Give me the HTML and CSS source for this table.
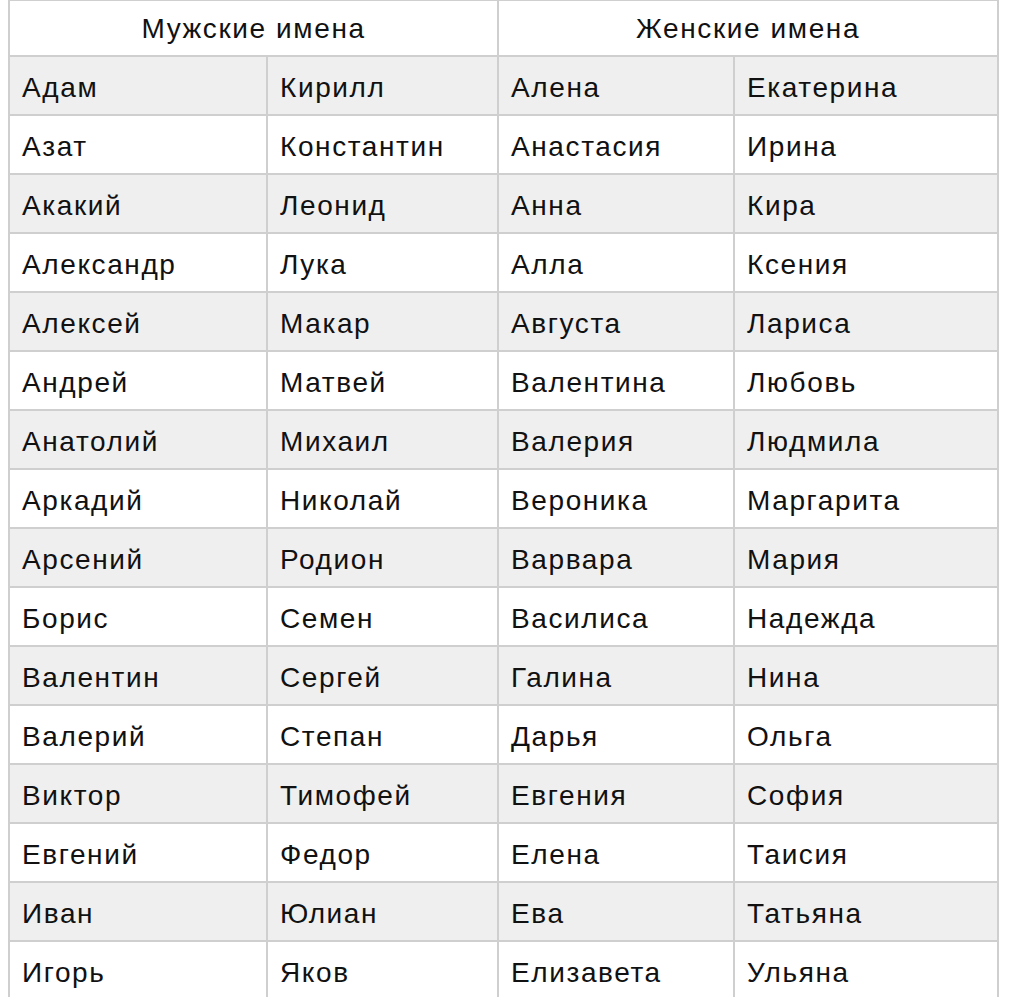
FILE: index.html
```html
<!DOCTYPE html>
<html lang="ru">
<head>
<meta charset="utf-8">
<title>Имена</title>
<link rel="stylesheet" href="styles.css">
</head>
<body>
<table class="names">
  <colgroup>
    <col class="c1"><col class="c2"><col class="c3"><col class="c4">
  </colgroup>
  <thead>
    <tr class="head"><th colspan="2">Мужские имена</th><th colspan="2">Женские имена</th></tr>
  </thead>
  <tbody>
    <tr class="alt"><td>Адам</td><td>Кирилл</td><td>Алена</td><td>Екатерина</td></tr>
    <tr><td>Азат</td><td>Константин</td><td>Анастасия</td><td>Ирина</td></tr>
    <tr class="alt"><td>Акакий</td><td>Леонид</td><td>Анна</td><td>Кира</td></tr>
    <tr><td>Александр</td><td>Лука</td><td>Алла</td><td>Ксения</td></tr>
    <tr class="alt"><td>Алексей</td><td>Макар</td><td>Августа</td><td>Лариса</td></tr>
    <tr><td>Андрей</td><td>Матвей</td><td>Валентина</td><td>Любовь</td></tr>
    <tr class="alt"><td>Анатолий</td><td>Михаил</td><td>Валерия</td><td>Людмила</td></tr>
    <tr><td>Аркадий</td><td>Николай</td><td>Вероника</td><td>Маргарита</td></tr>
    <tr class="alt"><td>Арсений</td><td>Родион</td><td>Варвара</td><td>Мария</td></tr>
    <tr><td>Борис</td><td>Семен</td><td>Василиса</td><td>Надежда</td></tr>
    <tr class="alt"><td>Валентин</td><td>Сергей</td><td>Галина</td><td>Нина</td></tr>
    <tr><td>Валерий</td><td>Степан</td><td>Дарья</td><td>Ольга</td></tr>
    <tr class="alt"><td>Виктор</td><td>Тимофей</td><td>Евгения</td><td>София</td></tr>
    <tr><td>Евгений</td><td>Федор</td><td>Елена</td><td>Таисия</td></tr>
    <tr class="alt"><td>Иван</td><td>Юлиан</td><td>Ева</td><td>Татьяна</td></tr>
    <tr><td>Игорь</td><td>Яков</td><td>Елизавета</td><td>Ульяна</td></tr>
  </tbody>
</table>
</body>
</html>
```
FILE: styles.css
```css
html, body {
  margin: 0;
  padding: 0;
  background: #ffffff;
}
body {
  font-family: "Liberation Sans", Arial, sans-serif;
  color: #111111;
}
.names {
  border-collapse: collapse;
  table-layout: fixed;
  width: 991px;
  margin: -1px 0 0 8px;
  border: 2px solid #cfcfcf;
}
.c1 { width: 258px; }
.c2 { width: 231px; }
.c3 { width: 236px; }
.c4 { width: 264px; }
.names th,
.names td {
  border: 2px solid #cfcfcf;
  font-size: 28px;
  line-height: 32px;
  letter-spacing: 1.6px;
  white-space: nowrap;
  overflow: hidden;
}
.names th {
  height: 56px;
  padding: 2px 0 0;
  font-weight: normal;
  text-align: center;
  box-sizing: border-box;
}
.names td {
  height: 59px;
  padding: 5px 12px 0;
  text-align: left;
  box-sizing: border-box;
}
.names tr.alt td {
  background: #efefef;
}
```
